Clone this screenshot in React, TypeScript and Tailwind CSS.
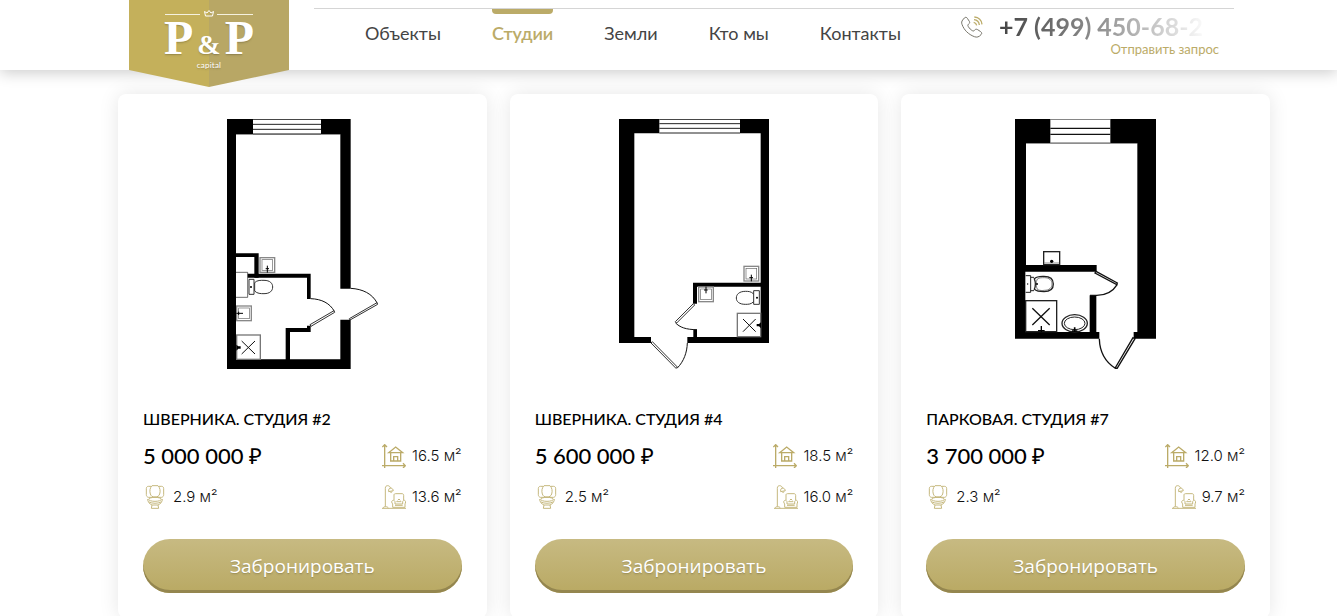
import type { ReactNode } from "react";

interface Studio {
  id: number;
  title: string;
  price: string;
  total: string;
  bath: string;
  living: string;
  plan: ReactNode;
}

const navItems = [
  { label: "Объекты", href: "#objects" },
  { label: "Студии", href: "#studios", active: true },
  { label: "Земли", href: "#lands" },
  { label: "Кто мы", href: "#about" },
  { label: "Контакты", href: "#contacts" },
];

function Sink({ x, y, tap }: { x: number; y: number; tap: string }) {
  return (
    <g>
      <rect x={x} y={y} width="44" height="44" stroke="#888" strokeWidth="4" />
      <rect x={x + 6} y={y + 6} width="32" height="32" stroke="#666" strokeWidth="2" />
      <path d={tap} stroke="#000" strokeWidth="3" />
    </g>
  );
}

function PlanTwo() {
  return (
    <svg viewBox="36 27 453 750" fill="none" className="h-[250px]" role="img" aria-label="План студии #2">
      <g fill="#000">
        <path d="M36 27H114V73H63V748H376V629H407V777H36Z" />
        <path d="M318 27H407V536H376V73H318Z" />
        <path d="M63 430H131V503H118V441H63Z" />
        <path d="M98 491H287V567H276V503H98Z" />
        <path d="M212 654H276V647H287V666H225V750H212Z" />
      </g>
      <path d="M114 28H318M114 43H318M114 58H318M114 72H318" stroke="#222" strokeWidth="3" />
      <path d="M63 487H98V562H63" stroke="#222" strokeWidth="2" />
      <path d="M63 73H376" stroke="#222" />
      <Sink x={135} y={443} tap="M157 467V488M152 476H162" />
      <Sink x={65} y={588} tap="M64 610H84M71 605V615" />
      {/* toilet */}
      <path d="M102 508H117V553H102ZM119 518C126 510 138 511 147 511C165 511 173 520 173 531C173 543 164 551 147 551C138 551 126 551 119 543Z" stroke="#333" strokeWidth="3" />
      <circle cx="108" cy="531" r="3" fill="#000" />
      {/* shower */}
      <rect x="65" y="675" width="71" height="73" stroke="#777" strokeWidth="4" />
      <path d="M80 693L120 732M120 693L80 732" stroke="#111" strokeWidth="3" />
      <path d="M64 704L70 709H77V716H70L64 722Z" fill="#000" />
      {/* doors */}
      <path d="M287 566C320 567 345 580 358 604" stroke="#111" strokeWidth="3" />
      <path d="M285 644L357 602L359 607L288 649Z" stroke="#333" strokeWidth="3" />
      <path d="M407 535C443 537 472 551 487 580" stroke="#111" strokeWidth="3" />
      <path d="M403 626L486 578L488 583L405 630Z" stroke="#333" strokeWidth="3" />
    </svg>
  );
}

function PlanFour() {
  return (
    <svg viewBox="42 27 450 750" fill="none" className="h-[250px]" role="img" aria-label="План студии #4">
      <g fill="#000">
        <path d="M42 27H163V70H88V681H138V699H42Z" />
        <path d="M405 27H492V699H247V681H265V659H276V681H467V70H405Z" />
        <path d="M264 518H468V530H276V581H264Z" />
      </g>
      <path d="M163 28H405M163 41H405M163 55H405M163 69H405" stroke="#222" strokeWidth="3" />
      <Sink x={417} y={469} tap="M439 494V514M433 503H444" />
      <Sink x={281} y={531} tap="M303 530V550M297 540H308" />
      <path d="M446 542H463V583H446ZM446 552C438 544 430 544 421 544C403 544 394 553 394 564C394 575 403 583 421 583C430 583 438 583 446 575" stroke="#333" strokeWidth="3" />
      <circle cx="456" cy="563" r="3" fill="#000" />
      <rect x="397" y="610" width="70" height="70" stroke="#777" strokeWidth="4" />
      <path d="M414 627L452 665M452 627L414 665" stroke="#111" strokeWidth="3" />
      <path d="M468 637L462 642H455V649H462L468 655Z" fill="#000" />
      <path d="M211 638C224 652 243 659 276 659" stroke="#111" strokeWidth="3" />
      <path d="M265 581L211 635L215 639L269 585Z" stroke="#333" strokeWidth="3" />
      <path d="M247 699C246 727 237 754 216 775" stroke="#111" strokeWidth="3" />
      <path d="M138 699L213 775L217 771L142 695Z" stroke="#333" strokeWidth="3" />
    </svg>
  );
}

function PlanSeven() {
  return (
    <svg viewBox="45 27 423 750" fill="none" className="h-[250px]" role="img" aria-label="План студии #7">
      <g fill="#000">
        <path d="M45 27H151V100H78V465H290V485H76V666H269V556H289V666H298V686H45Z" />
        <path d="M331 27H468V686H401V666H412V100H331Z" />
      </g>
      <path d="M151 28H331M151 99H331" stroke="#222" strokeWidth="2" />
      <path d="M151 55H331M151 73H331" stroke="#111" strokeWidth="4" />
      <path d="M78 100H412" stroke="#222" />
      <rect x="131" y="425" width="48" height="39" stroke="#222" strokeWidth="4" />
      <path d="M133 459H178" stroke="#555" strokeWidth="2" />
      <circle cx="155" cy="454" r="5" fill="#000" />
      {/* toilet */}
      <path d="M77 497H92V547H77M92 502H102M92 542H102" stroke="#222" strokeWidth="3" />
      <path d="M103 506C111 498 120 499 132 499C151 499 160 509 160 522C160 535 151 545 132 545C120 545 111 545 103 538C107 528 107 516 103 506Z" stroke="#222" strokeWidth="4" />
      <path d="M112 507C107 516 107 530 113 539C121 542 127 542 133 541C148 541 156 533 156 522C156 511 148 503 133 503C126 503 118 503 112 507Z" stroke="#444" strokeWidth="2" />
      <circle cx="111" cy="522" r="3" fill="#000" />
      <circle cx="83" cy="522" r="2" fill="#000" />
      {/* shower */}
      <rect x="77" y="572" width="93" height="93" stroke="#222" strokeWidth="4" />
      <path d="M97 595L149 645M149 595L97 645" stroke="#111" strokeWidth="4" />
      <path d="M124 648V666M114 662H134" stroke="#000" strokeWidth="4" />
      {/* wash basin */}
      <ellipse cx="224" cy="640" rx="38" ry="26" stroke="#222" strokeWidth="4" />
      <ellipse cx="224" cy="640" rx="31" ry="19" stroke="#222" strokeWidth="3" />
      <path d="M224 652V666M216 663H232" stroke="#000" strokeWidth="5" />
      {/* doors */}
      <path d="M270 556H290C318 556 339 544 352 523" stroke="#111" strokeWidth="4" />
      <path d="M288 484L352 519L350 524L285 489Z" stroke="#111" strokeWidth="4" />
      <path d="M298 686C299 724 317 757 348 776" stroke="#111" strokeWidth="4" />
      <path d="M399 683L346 773L351 776L405 686Z" stroke="#111" strokeWidth="4" />
    </svg>
  );
}

const studios: Studio[] = [
  { id: 2, title: "Шверника. Студия #2", price: "5 000 000 ₽", total: "16.5 м²", bath: "2.9 м²", living: "13.6 м²", plan: <PlanTwo /> },
  { id: 4, title: "Шверника. Студия #4", price: "5 600 000 ₽", total: "18.5 м²", bath: "2.5 м²", living: "16.0 м²", plan: <PlanFour /> },
  { id: 7, title: "Парковая. Студия #7", price: "3 700 000 ₽", total: "12.0 м²", bath: "2.3 м²", living: "9.7 м²", plan: <PlanSeven /> },
];

function AreaIcon() {
  return (
    <svg viewBox="0 0 72 72" className="size-6" fill="none" stroke="#bbab68" strokeWidth="4" aria-hidden="true">
      <path d="M8 2V72M1 9L8 2L15 9M0 65H70M63 58L70 65L63 72" />
      <path d="M20 26L41 9L62 26ZM26 26V51H56V26M35 51V38H47V51" />
    </svg>
  );
}

function ToiletIcon() {
  return (
    <svg viewBox="0 0 72 72" className="size-6" fill="none" stroke="#c6b97f" strokeWidth="3" aria-hidden="true">
      <path d="M24 4H16C12 4 10 7 10 11V29C10 33 12 36 16 37H56C60 36 62 33 62 29V11C62 7 60 4 56 4H48" />
      <path d="M27 2H45C51 8 53 18 50 27C48 33 44 36 36 36C28 36 24 33 22 27C19 18 21 8 27 2Z" />
      <ellipse cx="36" cy="43" rx="19" ry="6" />
      <path d="M14 42C14 50 19 57 27 60H45C53 57 58 50 58 42M18 51C28 56 44 56 54 51M27 60L25 70H47L45 60" />
    </svg>
  );
}

function LivingIcon() {
  return (
    <svg viewBox="0 0 72 72" className="size-6" fill="none" stroke="#c6b97f" strokeWidth="3" aria-hidden="true">
      <path d="M0 70H72M3 70C4 66 7 65 11 65C15 65 18 66 19 70M10 65V10C10 4 13 2 17 2C22 2 25 6 26 10" />
      <path d="M20 20C19 12 22 9 27 9C31 10 34 14 34 17ZM24 20C26 24 30 23 30 19" />
      <path d="M36 45V30C36 27 38 26 41 26H60C63 26 65 28 65 31V45M29 51C29 45 38 44 39 50V57H62V50C63 44 71 45 71 51C71 54 69 55 69 57V67H32V57C32 55 29 54 29 51ZM39 61H62M43 50H58M47 46L51 42L55 46" />
    </svg>
  );
}

function PhoneIcon() {
  return (
    <svg viewBox="0 0 66 66" className="size-[22px]" fill="none" aria-hidden="true">
      <path d="M5 12L10 6C13 3 17 3 19 7L25 16C27 19 26 22 23 24C20 27 20 29 22 32C26 38 29 41 34 44C37 46 39 45 41 42C44 39 47 39 50 41L59 47C63 50 63 53 60 56C54 63 48 65 40 62C22 55 9 42 3 25C1 20 2 16 5 12Z" stroke="#77756a" strokeWidth="3" />
      <path d="M38 19C43 20 46 23 47 28M39 11C48 12 54 18 55 27M40 3C53 4 62 13 63 25" stroke="#bbab68" strokeWidth="4" />
    </svg>
  );
}

function Logo() {
  return (
    <a href="#home" className="relative block h-[87px] w-40 shrink-0 self-start text-white">
      <svg viewBox="0 0 160 87" className="absolute inset-0 size-full" aria-hidden="true">
        <path d="M0 0H80V87L0 70Z" fill="#c4b05b" />
        <path d="M80 0H160V70L80 87Z" fill="#b8a765" />
        <path d="M36 14.500H71M88 14.500H124" stroke="#f5f1df" />
        <path d="M76.500 16L75.500 11.500L78 13L80 10.500L82 13L84.500 11.500L83.500 16Z" fill="none" stroke="#fff" />
      </svg>
      <span className="relative flex flex-col items-center pt-[18px] font-['Liberation_Serif',serif] text-shadow-sm">
        <span className="flex items-baseline gap-1 text-5xl/10 font-bold">
          P<span className="text-[28px]/6">&amp;</span>P
        </span>
        <span className="mt-[3px] font-['Lato',sans-serif] text-[8px]/2 tracking-wide">capital</span>
      </span>
    </a>
  );
}

function Header() {
  return (
    <header className="relative z-10 h-[70px] bg-white pr-[103px] pl-[129px] shadow-[0_3px_14px_rgba(0,0,0,0.2)]">
      <div className="flex gap-[25px]">
        <Logo />
        <div className="mt-2 flex h-[62px] flex-1 justify-between border-t border-[#d5d5d5] pr-[15px] pl-[51px]">
          <nav className="flex gap-[51px] text-lg text-[#444]">
            {navItems.map((item) => (
              <a
                key={item.label}
                href={item.href}
                className={item.active ? "flex flex-col font-semibold text-[#bbab68]" : "flex flex-col"}
              >
                <span className={item.active ? "h-[5px] rounded-b bg-[#bbab68]" : "h-[5px]"} />
                <span className="mt-[5px] leading-7">{item.label}</span>
              </a>
            ))}
          </nav>
          <div className="flex gap-4 pt-[3px]">
            <span className="pt-1"><PhoneIcon /></span>
            <div className="flex flex-col">
              <a
                href="tel:+7499450682"
                className="bg-linear-to-r from-[#444] via-[#999] via-50% to-white to-95% bg-clip-text pr-4 text-[25px]/7 font-bold text-transparent"
              >
                +7 (499) 450-68-2
              </a>
              <a href="#request" className="mt-px text-right text-[13px]/4 text-[#bbab68]">Отправить запрос</a>
            </div>
          </div>
        </div>
      </div>
    </header>
  );
}

function Stat({ icon, value }: { icon: ReactNode; value: string }) {
  return (
    <span className="flex items-center gap-[6px] font-['Inter',sans-serif] text-[15px]/6 font-light text-[#111]">
      {icon}
      {value}
    </span>
  );
}

function StudioCard({ studio }: { studio: Studio }) {
  return (
    <article className="rounded-lg bg-white p-[25px] shadow-[0_0_20px_rgba(0,0,0,0.1)]">
      <div className="flex justify-center">{studio.plan}</div>
      <h2 className="mt-[38px] text-base/6 font-medium uppercase">{studio.title}</h2>
      <div className="mt-[13px] flex items-center justify-between">
        <span className="text-[22px]/6 font-medium">{studio.price}</span>
        <Stat icon={<AreaIcon />} value={studio.total} />
      </div>
      <div className="mt-[17px] flex items-center justify-between">
        <Stat icon={<ToiletIcon />} value={studio.bath} />
        <Stat icon={<LivingIcon />} value={studio.living} />
      </div>
      <button
        type="button"
        className="mt-[30px] h-[54px] w-full rounded-full bg-linear-to-b from-[#c7ba82] to-[#b9a963] font-['Open_Sans',sans-serif] text-[19px] font-medium text-white shadow-[inset_0_-3px_0_#94864f] text-shadow-sm"
      >
        Забронировать
      </button>
    </article>
  );
}

export default function App() {
  return (
    <div className="overflow-hidden bg-white font-['Lato',sans-serif] text-black">
      <Header />
      <main className="grid grid-cols-3 gap-[23px] pt-6 pr-[67px] pb-6 pl-[118px]">
        {studios.map((studio) => (
          <StudioCard key={studio.id} studio={studio} />
        ))}
      </main>
    </div>
  );
}
